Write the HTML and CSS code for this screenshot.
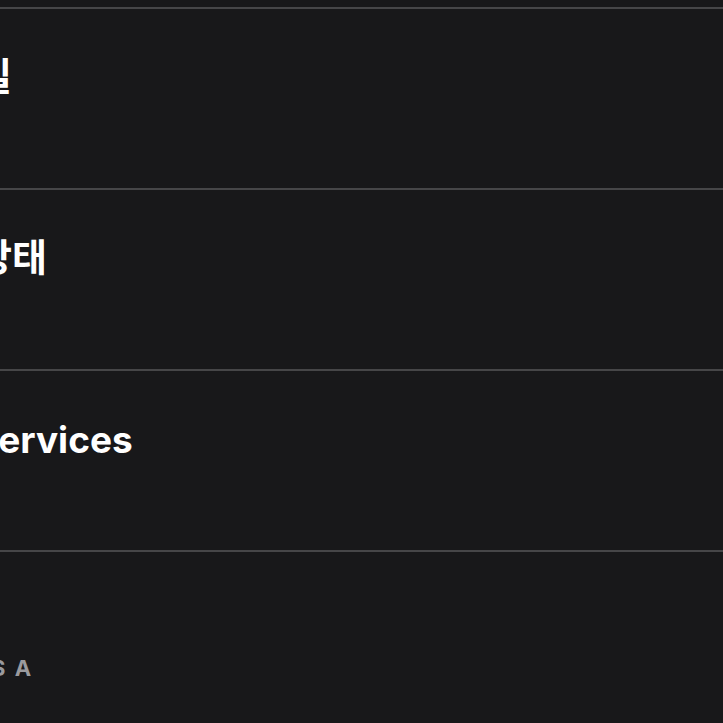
FILE: index.html
```html
<!DOCTYPE html>
<html lang="ko">
<head>
    <meta charset="UTF-8">
    <meta name="viewport" content="width=device-width, initial-scale=1.0">
    <title>설정</title>
    <link rel="stylesheet" href="styles.css">
</head>
<body>
    <div class="screen">
        <ul class="settings">
            <li class="row"><span class="label label-ko">일</span></li>
            <li class="row"><span class="label label-ko">상태</span></li>
            <li class="row"><span class="label label-en">Services</span></li>
        </ul>
        <div class="section-header">US A</div>
    </div>
</body>
</html>
```

FILE: styles.css
```css
body {
    margin: 0;
    background-color: #18181a;
    font-family: Inter, "Noto Sans CJK KR", sans-serif;
    color: #ffffff;
    overflow: hidden;
}

.screen {
    width: 723px;
    height: 723px;
    overflow: hidden;
}

.settings {
    list-style: none;
    margin: 7px 0 0 0;
    padding: 0;
    border-top: 2px solid #464648;
}

.row {
    height: 179px;
    border-bottom: 2px solid #464648;
}

.label {
    display: block;
    padding-top: 44px;
    font-size: 38px;
    font-weight: 700;
    line-height: 46px;
    white-space: nowrap;
}

.label-ko {
    margin-left: -23px;
}

.label-en {
    margin-left: -26px;
    font-size: 37px;
    padding-top: 46px;
}

.section-header {
    margin-left: -27px;
    padding-top: 102px;
    font-size: 22px;
    font-weight: 700;
    letter-spacing: 2px;
    line-height: 28px;
    color: #9a9a9e;
    white-space: nowrap;
}
```
